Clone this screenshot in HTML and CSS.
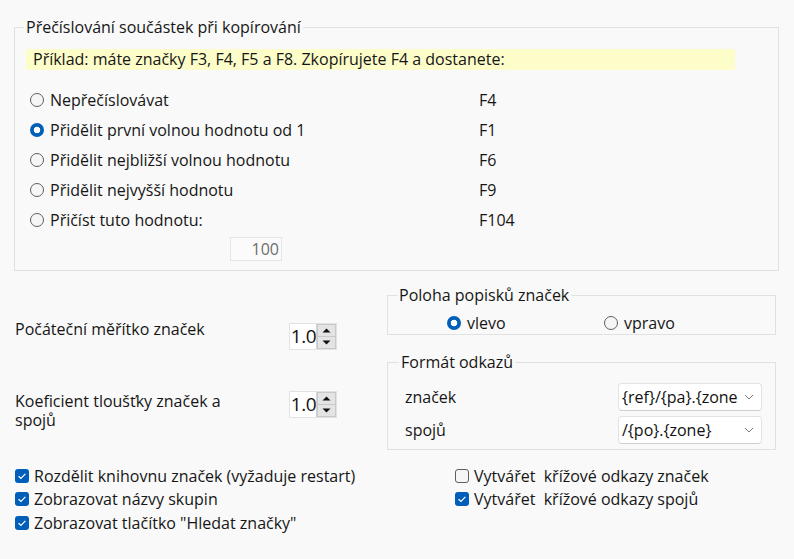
FILE: index.html
```html
<!DOCTYPE html>
<html lang="cs">
<head>
<meta charset="utf-8">
<title>Nastavení</title>
<link rel="stylesheet" href="styles.css">
</head>
<body>
<div class="page">
  <fieldset class="group renum">
    <legend>Přečíslování součástek při kopírování</legend>
    <div class="hint">Příklad: máte značky F3, F4, F5 a F8. Zkopírujete F4 a dostanete:</div>
    <div class="options">
      <label class="opt"><span class="radio"></span>Nepřečíslovávat</label><span class="val">F4</span>
      <label class="opt"><span class="radio on"></span>Přidělit první volnou hodnotu od 1</label><span class="val">F1</span>
      <label class="opt"><span class="radio"></span>Přidělit nejbližší volnou hodnotu</label><span class="val">F6</span>
      <label class="opt"><span class="radio"></span>Přidělit nejvyšší hodnotu</label><span class="val">F9</span>
      <label class="opt"><span class="radio"></span>Přičíst tuto hodnotu:</label><span class="val">F104</span>
    </div>
    <div class="numbox">100</div>
  </fieldset>

  <div class="lower">
    <div class="scales">
      <div class="scale-row first">
        <span class="scale-label">Počáteční měřítko značek</span>
        <span class="spin">
          <span class="spin-val">1.0</span>
          <span class="spin-btns">
            <span class="sb"><svg width="9" height="5" viewBox="0 0 9 5"><path d="M0.5 4.5 L4.5 0.5 L8.5 4.5 Z" fill="#111"/></svg></span>
            <span class="sb"><svg width="9" height="5" viewBox="0 0 9 5"><path d="M0.5 0.5 L4.5 4.5 L8.5 0.5 Z" fill="#111"/></svg></span>
          </span>
        </span>
      </div>
      <div class="scale-row second">
        <span class="scale-label wrap">Koeficient tloušťky značek a spojů</span>
        <span class="spin">
          <span class="spin-val">1.0</span>
          <span class="spin-btns">
            <span class="sb"><svg width="9" height="5" viewBox="0 0 9 5"><path d="M0.5 4.5 L4.5 0.5 L8.5 4.5 Z" fill="#111"/></svg></span>
            <span class="sb"><svg width="9" height="5" viewBox="0 0 9 5"><path d="M0.5 0.5 L4.5 4.5 L8.5 0.5 Z" fill="#111"/></svg></span>
          </span>
        </span>
      </div>
    </div>

    <div class="right">
      <fieldset class="group pos">
        <legend>Poloha popisků značek</legend>
        <div class="pos-row">
          <label class="opt"><span class="radio on"></span>vlevo</label>
          <label class="opt"><span class="radio"></span>vpravo</label>
        </div>
      </fieldset>
      <fieldset class="group fmt">
        <legend>Formát odkazů</legend>
        <div class="fmt-row">
          <span class="fmt-label">značek</span>
          <span class="combo"><span class="combo-text">{ref}/{pa}.{zone</span><svg class="chev" width="10" height="6" viewBox="0 0 10 6"><path d="M1 1 L5 5 L9 1" fill="none" stroke="#7a7a7a" stroke-width="1"/></svg></span>
        </div>
        <div class="fmt-row">
          <span class="fmt-label">spojů</span>
          <span class="combo"><span class="combo-text">/{po}.{zone}</span><svg class="chev" width="10" height="6" viewBox="0 0 10 6"><path d="M1 1 L5 5 L9 1" fill="none" stroke="#7a7a7a" stroke-width="1"/></svg></span>
        </div>
      </fieldset>
    </div>
  </div>

  <div class="checks">
    <label class="chk"><span class="box on"><svg width="14" height="14" viewBox="0 0 14 14"><path d="M3.6 7.3 L5.9 9.5 L10.4 4.9" fill="none" stroke="#fff" stroke-width="1.2"/></svg></span>Rozdělit knihovnu značek (vyžaduje restart)</label>
    <label class="chk"><span class="box"></span>Vytvářet&nbsp; křížové odkazy značek</label>
    <label class="chk"><span class="box on"><svg width="14" height="14" viewBox="0 0 14 14"><path d="M3.6 7.3 L5.9 9.5 L10.4 4.9" fill="none" stroke="#fff" stroke-width="1.2"/></svg></span>Zobrazovat názvy skupin</label>
    <label class="chk"><span class="box on"><svg width="14" height="14" viewBox="0 0 14 14"><path d="M3.6 7.3 L5.9 9.5 L10.4 4.9" fill="none" stroke="#fff" stroke-width="1.2"/></svg></span>Vytvářet&nbsp; křížové odkazy spojů</label>
    <label class="chk"><span class="box on"><svg width="14" height="14" viewBox="0 0 14 14"><path d="M3.6 7.3 L5.9 9.5 L10.4 4.9" fill="none" stroke="#fff" stroke-width="1.2"/></svg></span>Zobrazovat tlačítko "Hledat značky"</label>
  </div>
</div>
</body>
</html>
```

FILE: styles.css
```css
* { box-sizing: border-box; }
html, body { margin: 0; padding: 0; }
body {
  background: #f9f9f9;
  font-family: "Open Sans", "Noto Sans", sans-serif;
  font-size: 16px;
  color: #161616;
  width: 794px;
  height: 559px;
  overflow: hidden;
}
.page { padding: 17px 0 0 14px; }

.group {
  margin: 0;
  border: 1px solid #e1e1e1;
  min-width: 0;
}
.group legend {
  padding: 0 2px;
  line-height: 20px;
}

/* top group */
.renum { width: 765px; padding: 0 0 9px 11px; }
.renum legend { margin-left: -2px; }
.hint {
  margin-top: 12px;
  width: 709px;
  height: 21px;
  line-height: 21px;
  background: #fdfdca;
  padding-left: 7px;
  white-space: nowrap;
}
.options {
  margin-top: 15px;
  display: grid;
  grid-template-columns: 453px auto;
  grid-auto-rows: 30px;
  align-items: center;
}
.opt { display: flex; align-items: center; padding-left: 4px; white-space: nowrap; }
.radio {
  flex: none;
  width: 14px;
  height: 14px;
  border-radius: 50%;
  border: 1px solid #5f5f5f;
  background: #f6f6f6;
  margin-right: 6px;
}
.radio.on {
  border: none;
  background: radial-gradient(circle, #fff 0 3px, #005fb8 3.6px);
}
.numbox {
  margin: 2px 0 0 204px;
  width: 52px;
  height: 24px;
  line-height: 22px;
  border: 1px solid #e6e6e6;
  background: #fbfbfb;
  color: #6e6e6e;
  text-align: right;
  padding-right: 2px;
}

/* lower area */
.lower {
  margin-top: 14px;
  display: grid;
  grid-template-columns: 373px 389px;
}
.scales { padding: 34px 0 0 1px; }
.scale-row { display: flex; align-items: flex-start; }
.scale-row.first { height: 72px; }
.scale-row.first .spin { margin-top: 4px; }
.scale-label { flex: none; width: 274px; line-height: 20px; }
.scale-label.wrap { padding-right: 50px; line-height: 19px; padding-top: 1px; }
.spin {
  display: flex;
  width: 48px;
  height: 27px;
  border: 1px solid #e2e2e2;
  background: #fff;
}
.spin-val {
  width: 26px;
  font-size: 19px;
  line-height: 25px;
  text-align: right;
  letter-spacing: -0.5px;
  color: #111;
}
.spin-btns {
  flex: none;
  width: 20px;
  display: flex;
  flex-direction: column;
  border-left: 1px solid #d4d4d4;
}
.sb {
  flex: 1;
  display: flex;
  align-items: center;
  justify-content: center;
  background: #e4e4e4;
  border: 1px solid #c9c9c9;
}
.sb + .sb { border-top: none; }

.pos { width: 389px; padding: 0 0 2px 0; }
.pos legend { margin-left: 9px; }
.pos-row {
  margin-top: 7px;
  height: 20px;
  display: grid;
  grid-template-columns: 157px auto;
  padding-left: 55px;
  align-items: center;
}

.fmt { width: 389px; margin-top: 17px; padding: 0 0 5px 17px; }
.fmt legend { margin-left: -6px; }
.fmt-row { display: flex; align-items: center; height: 28px; }
.fmt-row:first-of-type { margin-top: 11px; }
.fmt-row + .fmt-row { margin-top: 5px; }
.fmt-label { width: 213px; flex: none; }
.combo {
  display: flex;
  align-items: center;
  width: 144px;
  height: 28px;
  background: #fff;
  border: 1px solid #e3e3e3;
  border-bottom-color: #cfcfcf;
  border-radius: 4px;
  padding: 0 7px 0 3px;
}
.combo-text {
  flex: 1;
  white-space: nowrap;
  color: #111;
}
.chev { flex: none; margin-left: 4px; }

/* checkboxes */
.checks {
  margin-top: 14px;
  display: grid;
  grid-template-columns: 440px auto;
  grid-auto-rows: 23.5px;
  padding-left: 1px;
}
.chk { display: flex; align-items: center; white-space: nowrap; }
.box {
  flex: none;
  width: 14px;
  height: 14px;
  border-radius: 3px;
  border: 1px solid #5f5f5f;
  background: #f6f6f6;
  margin-right: 5px;
  display: flex;
}
.box.on { border: none; background: #005fb8; }
```
